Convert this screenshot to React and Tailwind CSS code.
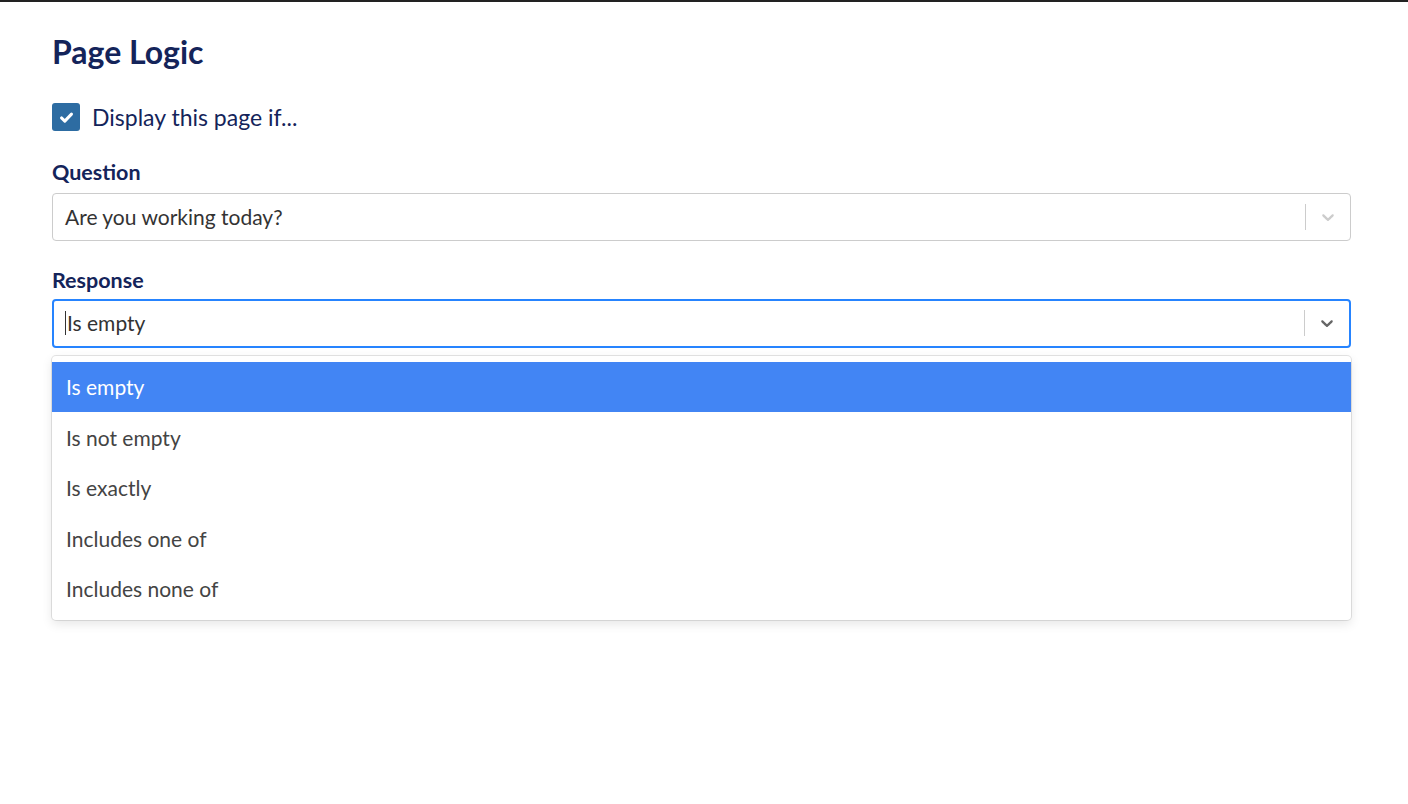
import React from 'react'

const options = ['Is empty', 'Is not empty', 'Is exactly', 'Includes one of', 'Includes none of']

const Chevron = ({ className }) => (
  <svg viewBox="0 0 20 20" className={className} fill="currentColor">
    <path d="M4.516 7.548c0.436-0.446 1.043-0.481 1.576 0l3.908 3.747 3.908-3.747c0.533-0.481 1.141-0.446 1.574 0 0.436 0.445 0.408 1.197 0 1.615-0.406 0.418-4.695 4.502-4.695 4.502-0.217 0.223-0.502 0.335-0.787 0.335s-0.57-0.112-0.789-0.335c0 0-4.287-4.084-4.695-4.502s-0.436-1.17 0-1.615z" />
  </svg>
)

export default function App() {
  return (
    <div className="min-h-[804px] bg-white border-t-2 border-[#222] font-['Lato','Liberation_Sans',sans-serif]">
      <div className="pl-[52px] pr-[57px] pt-[30px]">
        <h1 className="text-[32px] leading-[40px] font-bold text-[#14245a]">Page Logic</h1>

        <label className="mt-[28px] flex items-center gap-3">
          <span className="w-[28px] h-[28px] rounded-[3px] bg-[#2d6ca2] flex items-center justify-center">
            <svg viewBox="0 0 16 16" className="w-[17px] h-[17px]" fill="none" stroke="white" strokeWidth="2.8" strokeLinecap="round" strokeLinejoin="round">
              <path d="M3.3 8.4l3.1 3 6.3-6.6" />
            </svg>
          </span>
          <span className="text-[23px] text-[#14245a]">Display this page if...</span>
        </label>

        <div className="mt-[24px] text-[21.5px] leading-[26px] font-bold text-[#14245a]">Question</div>
        <div className="mt-[8px] h-[48px] border border-[#ccc] rounded-[4px] flex items-center">
          <span className="flex-1 pl-[12px] text-[21px] text-[#333]">Are you working today?</span>
          <span className="w-px h-[26px] bg-[#ccc]" />
          <Chevron className="w-[20px] h-[20px] mx-[12px] text-[#ccc]" />
        </div>

        <div className="mt-[26px] text-[21.5px] leading-[26px] font-bold text-[#14245a]">Response</div>
        <div className="relative">
          <div className="mt-[6px] h-[49px] border-2 border-[#2684ff] rounded-[4px] flex items-center">
            <span className="flex-1 pl-[11px] text-[21px] text-[#333] flex items-center">
              <span className="w-px h-[24px] bg-[#333] mr-px" />
              Is empty
            </span>
            <span className="w-px h-[26px] bg-[#ccc]" />
            <Chevron className="w-[20px] h-[20px] mx-[12px] text-[#666]" />
          </div>

          <div className="absolute left-0 right-0 top-[57px] bg-white rounded-[4px] py-[6px] shadow-[0_0_0_1px_rgba(0,0,0,0.1),0_4px_11px_rgba(0,0,0,0.1)]">
            {options.map((o, i) => (
              <div
                key={o}
                className={`h-[50.5px] flex items-center px-[14px] text-[21px] ${
                  i === 0 ? 'bg-[#4285f4] text-white' : 'text-[#444]'
                }`}
              >
                {o}
              </div>
            ))}
          </div>
        </div>
      </div>
    </div>
  )
}
